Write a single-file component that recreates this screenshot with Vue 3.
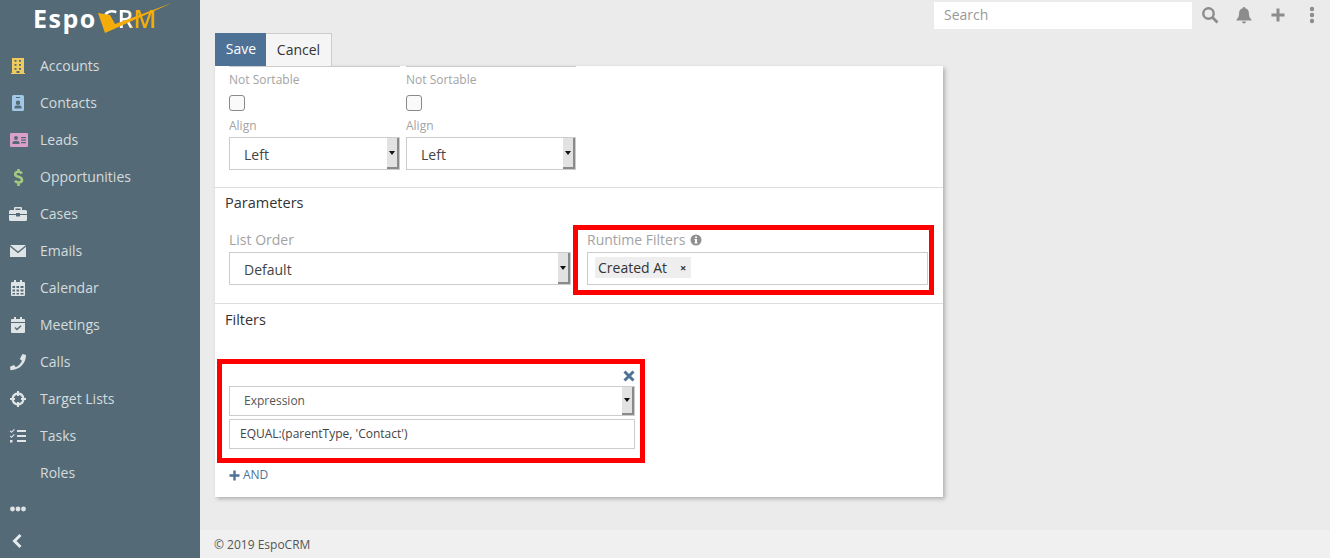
<script setup>
const items = [
  { label: 'Accounts', color: '#efcb5d', d: 'M4 2h12v15h1v1H3v-1h1zM6.500 4v1.800h2V4zM11 4v1.800h2V4zM6.500 8v1.800h2V8zM11 8v1.800h2V8zM6.500 12v1.800h2V12zM11 12v1.800h2V12zM8.500 15v2h3v-2z' },
  { label: 'Contacts', color: '#a3c7e6', d: 'M5.500 2h9A1.500 1.500 0 0 1 16 3.500v13a1.500 1.500 0 0 1-1.500 1.500h-9A1.500 1.500 0 0 1 4 16.500v-13A1.500 1.500 0 0 1 5.500 2zM8 4v1h4V4zM10 7.500a2.200 2.200 0 1 0 0 4.400a2.200 2.200 0 0 0 0-4.400zM6.500 15.500h7v-1.300c0-1-1-1.700-2-1.700h-3c-1 0-2 .7-2 1.700z' },
  { label: 'Leads', color: '#d9a0ca', d: 'M3 3h16a1 1 0 0 1 1 1v12a1 1 0 0 1-1 1H3a1 1 0 0 1-1-1V4a1 1 0 0 1 1-1zM8 6a2 2 0 1 0 0 4a2 2 0 0 0 0-4zM4.500 14h7v-1.200c0-1-1-1.800-2-1.800h-3c-1 0-2 .8-2 1.800zM13 7v1.200h5V7zM13 9.500v1.200h5V9.500zM13 12v1.200h5V12z' },
  { label: 'Opportunities', color: '#a6c97f', stroke: 'M13.800 6.600C13 5.300 12 4.800 10.500 4.800C8.200 4.800 7.200 5.900 7.200 7.200C7.200 10.700 14 9 14 13C14 14.400 12.900 15.500 10.500 15.500C9 15.500 7.800 14.900 7 13.800M10.500 2v2.800M10.500 15.500V19' },
  { label: 'Cases', color: '#dfe4e6', d: 'M7 3h6a1 1 0 0 1 1 1v2h3.500A1.500 1.500 0 0 1 19 7.500V10h-7V9H8v1H1V7.500A1.500 1.500 0 0 1 2.500 6H6V4a1 1 0 0 1 1-1zM7.500 4.500V6h5V4.500zM1 11h7v1.500h4V11h7v4.500a1.500 1.500 0 0 1-1.500 1.500h-15A1.500 1.500 0 0 1 1 15.500z' },
  { label: 'Emails', color: '#dfe4e6', d: 'M2 4h16L10 10.500zM2 5.800l8 6.500l8-6.500V16H2z' },
  { label: 'Calendar', color: '#dfe4e6', d: 'M6 2h2v2h4V2h2v2h2a1 1 0 0 1 1 1v12a1 1 0 0 1-1 1H4a1 1 0 0 1-1-1V5a1 1 0 0 1 1-1h2zM4.500 8v2H7V8zM8.500 8v2H11V8zM12.500 8v2h3V8zM4.500 11.500v2H7v-2zM8.500 11.500v2H11v-2zM12.500 11.500v2h3v-2zM4.500 15v1.500H7V15zM8.500 15v1.500H11V15zM12.500 15v1.500h3V15z' },
  { label: 'Meetings', color: '#dfe4e6', d: 'M6 2h2v2h4V2h2v2h2a1 1 0 0 1 1 1v2H3V5a1 1 0 0 1 1-1h2zM3 8h14v9a1 1 0 0 1-1 1H4a1 1 0 0 1-1-1zM9 15.500l4.500-4.300l-1-1L9 13.500l-1.500-1.400l-1 1z' },
  { label: 'Calls', color: '#dfe4e6', d: 'M14.500 2L18 3c0 8-6 15-15.500 15.200L2 14.800l4-1.800l1.800 2.200c3-1.400 5-3.600 6.200-6.400L11.800 7z' },
  { label: 'Target Lists', color: '#dfe4e6', d: 'M9 2h2v1.600A6.500 6.500 0 0 1 16.400 9H18v2h-1.600A6.500 6.500 0 0 1 11 16.400V18H9v-1.600A6.500 6.500 0 0 1 3.600 11H2V9h1.600A6.500 6.500 0 0 1 9 3.600zM9 5.700A4.500 4.500 0 0 0 5.700 9H7v2H5.700A4.500 4.500 0 0 0 9 14.300V13h2v1.300A4.500 4.500 0 0 0 14.300 11H13V9h1.300A4.500 4.500 0 0 0 11 5.700V7H9z' },
  { label: 'Tasks', color: '#dfe4e6', d: 'M9 4h9v2H9zM9 9h9v2H9zM9 14h9v2H9zM2.500 4.500l1 1L6 3l.8.8l-3.300 3.300L1.700 5.300zM2.500 9.500l1 1L6 8l.8.8l-3.300 3.300L1.700 10.300zM2 14h2.500v2.500H2z' },
  { label: 'Roles' }
]
</script>

<template>
  <div class="app">
    <aside class="sidebar">
      <div class="logo">
        <span class="logo-espo">Espo</span><span class="logo-crm">CRM</span>
        <svg class="logo-check" width="76" height="34" viewBox="0 0 76 34">
          <path d="M0 13L12 15L17 24L74 3L7 33z" fill="#f4ac0a" />
        </svg>
      </div>
      <nav class="nav">
        <a v-for="it in items" :key="it.label" class="nav-item">
          <svg class="nav-icon" width="20" height="20" viewBox="0 0 20 20">
            <path v-if="it.d" :d="it.d" :fill="it.color" fill-rule="evenodd" />
            <path v-if="it.stroke" :d="it.stroke" :stroke="it.color" fill="none" stroke-width="2.600" />
          </svg>
          <span>{{ it.label }}</span>
        </a>
      </nav>
      <div class="more">
        <svg width="16" height="6" viewBox="0 0 16 6"><g fill="#dfe4e6"><circle cx="2.500" cy="3" r="2.400" /><circle cx="8" cy="3" r="2.400" /><circle cx="13.500" cy="3" r="2.400" /></g></svg>
      </div>
      <div class="collapse">
        <svg width="12" height="16" viewBox="0 0 12 16"><path d="M9.500 2L3.500 8l6 6" fill="none" stroke="#e6eaec" stroke-width="3" /></svg>
      </div>
    </aside>

    <div class="main">
      <header class="topbar">
        <div class="search">Search</div>
        <svg class="top-icon" width="18" height="18" viewBox="0 0 18 18"><circle cx="7.500" cy="7.500" r="5.200" fill="none" stroke="#8c8c8c" stroke-width="2.400" /><path d="M11.500 11.500l5 5" stroke="#8c8c8c" stroke-width="2.800" /></svg>
        <svg class="top-icon" width="18" height="18" viewBox="0 0 18 18"><path d="M9 1a1.300 1.300 0 0 1 1.300 1.300C13 3 14 5 14 8c0 3 1 4 2.500 5.500v1h-15v-1C3 12 4 11 4 8c0-3 1-5 3.700-5.700A1.300 1.300 0 0 1 9 1zM7 15.500h4a2 2 0 0 1-4 0z" fill="#8c8c8c" /></svg>
        <svg class="top-icon" width="18" height="18" viewBox="0 0 18 18"><path d="M9 2.500v13M2.500 9h13" stroke="#8c8c8c" stroke-width="3" /></svg>
        <svg class="top-icon dots" width="6" height="18" viewBox="0 0 6 18"><g fill="#8c8c8c"><circle cx="3" cy="3" r="2.200" /><circle cx="3" cy="9" r="2.200" /><circle cx="3" cy="15" r="2.200" /></g></svg>
      </header>

      <div class="content">
        <div class="buttons">
          <button class="btn primary">Save</button>
          <button class="btn">Cancel</button>
        </div>

        <section class="panel">
          <div class="columns">
            <div class="col">
              <div class="lbl small first">Not Sortable</div>
              <span class="check"></span>
              <div class="lbl small">Align</div>
              <div class="select"><span>Left</span><i class="arrow"></i></div>
            </div>
            <div class="col">
              <div class="lbl small first">Not Sortable</div>
              <span class="check"></span>
              <div class="lbl small">Align</div>
              <div class="select"><span>Left</span><i class="arrow"></i></div>
            </div>
          </div>

          <div class="section params">
            <h4>Parameters</h4>
            <div class="param-row">
              <div class="param order">
                <div class="lbl">List Order</div>
                <div class="select"><span>Default</span><i class="arrow"></i></div>
              </div>
              <div class="param runtime">
                <div class="lbl">Runtime Filters
                  <svg class="info" width="12" height="12" viewBox="0 0 12 12"><path fill-rule="evenodd" d="M6 .5a5.500 5.500 0 1 1 0 11a5.500 5.500 0 0 1 0-11zM5 2.500V4h2V2.500zM4.500 5v1H5v2.500h-.5v1h3v-1H7V5z" fill="#8f8f8f" /></svg>
                </div>
                <div class="tags"><span class="tag">Created At<b>×</b></span></div>
                <div class="mark mark-runtime"></div>
              </div>
            </div>
          </div>

          <div class="section filters">
            <h4>Filters</h4>
            <div class="filter-box">
              <div class="close-row">
                <svg width="12" height="12" viewBox="0 0 12 12"><path d="M1.500 1.500l9 9M10.500 1.500l-9 9" stroke="#4f7295" stroke-width="3" /></svg>
              </div>
              <div class="select expr"><span>Expression</span><i class="arrow"></i></div>
              <div class="input">EQUAL:(parentType, 'Contact')</div>
              <div class="mark mark-filter"></div>
            </div>
            <div class="and">
              <svg width="11" height="11" viewBox="0 0 11 11"><path d="M5.500 .5v10M.5 5.500h10" stroke="#4f7295" stroke-width="2.400" /></svg>
              AND
            </div>
          </div>
        </section>
      </div>

      <footer class="footer">© 2019 EspoCRM</footer>
    </div>
  </div>
</template>

<style>
html, body { margin: 0; }
</style>

<style scoped>
.app {
  display: flex;
  width: 1330px;
  height: 558px;
  overflow: hidden;
  font-family: "Open Sans", sans-serif;
  font-size: 14px;
  color: #333;
  background: #ebebeb;
}
.sidebar {
  width: 200px;
  flex: none;
  display: flex;
  flex-direction: column;
  background: #546b77;
}
.logo {
  position: relative;
  height: 47px;
  box-sizing: border-box;
  padding-left: 33px;
  font-size: 25px;
  line-height: 36px;
  white-space: nowrap;
}
.logo-espo { color: #fff; font-weight: 700; letter-spacing: 1.500px; }
.logo-crm {
  margin-left: 5px;
  font-weight: 600;
  letter-spacing: 0;
  background: linear-gradient(90deg, #fff 0, #fff 50%, #f4ac0a 58%, #f4ac0a 100%);
  -webkit-background-clip: text;
  background-clip: text;
  color: transparent;
}
.logo-check { position: absolute; left: 98px; top: 0; }
.nav { display: flex; flex-direction: column; }
.nav-item {
  display: flex;
  align-items: center;
  height: 37px;
  padding-left: 8px;
  color: #d5dbde;
}
.nav-icon { margin-right: 12px; flex: none; }
.more { height: 30px; margin-top: 3px; padding-left: 10px; display: flex; align-items: center; }
.collapse { padding-left: 11px; height: 33px; display: flex; align-items: center; }
.main {
  flex: 1;
  display: flex;
  flex-direction: column;
  min-width: 0;
}
.topbar {
  height: 33px;
  flex: none;
  box-sizing: border-box;
  padding: 2px 0 0 734px;
  display: flex;
  align-items: flex-start;
}
.search {
  width: 258px;
  height: 27px;
  box-sizing: border-box;
  padding-left: 10px;
  background: #fff;
  color: #999;
  line-height: 25px;
}
.top-icon { margin-top: 4px; margin-left: 9px; }
.top-icon + .top-icon { margin-left: 16px; }
.top-icon.dots { margin-left: 22px; }
.content { flex: 1; padding-left: 15px; }
.buttons { display: flex; height: 33px; }
.btn {
  height: 33px;
  box-sizing: border-box;
  padding: 0 0 2px;
  font: inherit;
  color: #333;
  background: #f5f5f5;
  border: 1px solid #ccc;
  border-left: 0;
  border-bottom: 0;
  width: 66px;
}
.btn.primary {
  width: 51px;
  padding-left: 1px;
  background: #4e7296;
  color: #fff;
  border: 0;
}
.panel {
  width: 728px;
  height: 431px;
  background: #fff;
  box-shadow: 2px 2px 4px rgba(0, 0, 0, .25);
}
.columns {
  display: flex;
  gap: 6px;
  padding: 0 14px;
  height: 121px;
}
.col { width: 171px; border-top: 1px solid #ccc; }
.col + .col { width: 170px; }
.lbl { color: #a3a3a3; font-size: 14px; line-height: 20px; }
.lbl.small { font-size: 12px; line-height: 16px; height: 16px; }
.lbl.first { margin-top: 5px; }
.check {
  display: block;
  width: 14px;
  height: 14px;
  margin: 7px 0 7px;
  border: 1px solid #8a8a8a;
  border-radius: 3px;
  background: #fafafa;
}
.lbl.small + .select { margin-top: 3px; }
.select {
  display: flex;
  justify-content: space-between;
  align-items: stretch;
  height: 33px;
  box-sizing: border-box;
  border: 1px solid #ccc;
  background: #fff;
  color: #444;
  line-height: 33px;
}
.select span { padding-left: 14px; }
.arrow {
  position: relative;
  flex: none;
  width: 10px;
  background: #e2e2e2;
  border-right: 2px solid #8a8a8a;
  border-bottom: 2px solid #8a8a8a;
}
.arrow::after {
  content: "";
  position: absolute;
  left: 2px;
  top: 44%;
  border: 3px solid transparent;
  border-top: 4px solid #111;
  border-bottom: 0;
}
.section { border-top: 1px solid #ddd; padding: 0 10px; }
h4 {
  margin: 0;
  font-size: 14.500px;
  font-weight: 400;
  line-height: 20px;
  color: #333;
}
.params { height: 116px; box-sizing: border-box; padding-top: 5px; }
.param-row { display: flex; margin-top: 19px; padding-left: 4px; gap: 16px; }
.param-row .lbl { line-height: 20px; margin-bottom: 2px; margin-top: -2px; }
.param.order { width: 342px; }
.param.runtime { width: 341px; position: relative; }
.info { vertical-align: -1px; margin-left: 1px; }
.tags {
  height: 33px;
  box-sizing: border-box;
  border: 1px solid #ccc;
  padding: 4px 7px;
}
.tag {
  display: inline-flex;
  align-items: center;
  height: 21px;
  padding: 0 4px 0 3px;
  background: #eee;
  color: #333;
}
.tag b { font-weight: 700; font-size: 11px; margin-left: 12px; width: 8px; text-align: center; }
.filters { padding-top: 6px; }
.filter-box { position: relative; margin: 33px 0 0 4px; width: 406px; }
.close-row { height: 23px; display: flex; justify-content: flex-end; align-items: center; }
.close-row svg { margin-top: 2px; }
.select.expr { height: 30px; line-height: 28px; }
.select.expr span { font-size: 12px; color: #555; }
.input {
  height: 30px;
  box-sizing: border-box;
  margin-top: 3px;
  border: 1px solid #ccc;
  padding-left: 10px;
  line-height: 28px;
  font-size: 12px;
  color: #444;
}
.and {
  margin: 16px 0 0 4px;
  display: flex;
  align-items: center;
  gap: 3px;
  font-size: 12px;
  line-height: 20px;
  color: #4f7295;
}
.mark { position: absolute; box-sizing: border-box; border: 5px solid #f00; pointer-events: none; }
.mark-runtime { left: -14px; top: -7px; width: 361px; height: 70px; }
.mark-filter { left: -12px; top: -4px; width: 428px; height: 104px; }
.footer {
  height: 28px;
  flex: none;
  box-sizing: border-box;
  padding-left: 14px;
  background: #f0f0f0;
  font-size: 12px;
  line-height: 30px;
  color: #555;
}
</style>
